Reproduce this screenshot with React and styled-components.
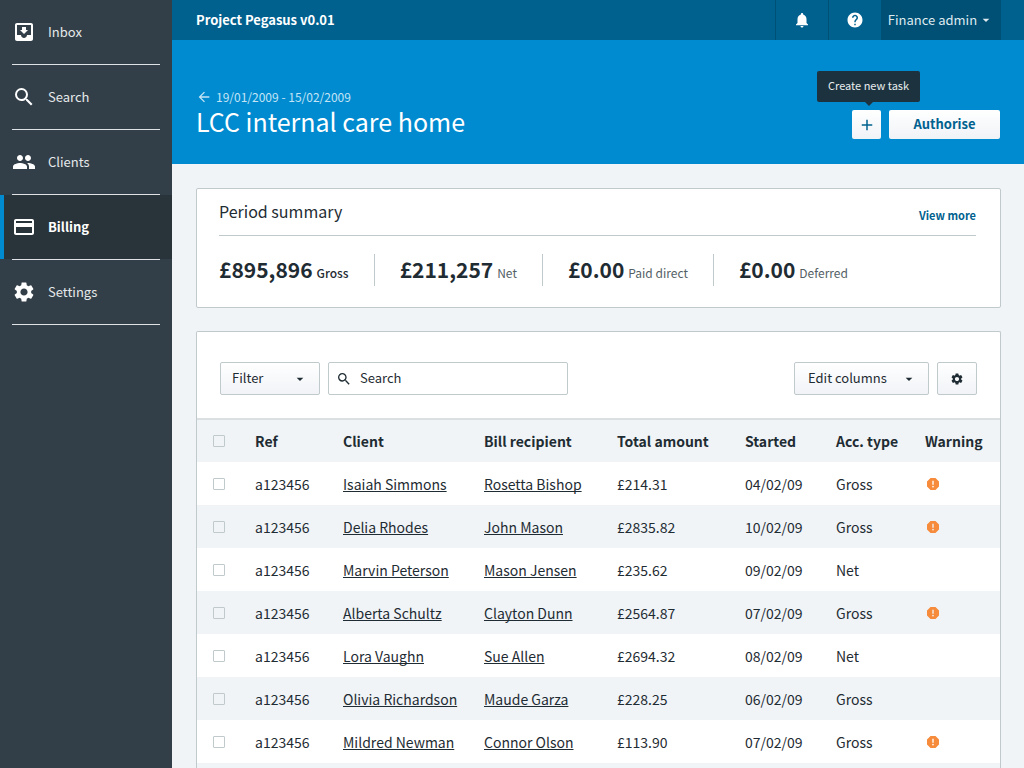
import React from "react";
import styled, { createGlobalStyle } from "styled-components";
import {
  MdMoveToInbox,
  MdSearch,
  MdPeople,
  MdPayment,
  MdSettings,
  MdNotifications,
  MdHelp,
  MdArrowBack,
  MdArrowDropDown,
  MdAdd,
  MdReport,
} from "react-icons/md";

const color = {
  ink: "#1f2c33",
  muted: "#545f66",
  line: "#c0c9cb",
  page: "#f0f4f7",
  brand: "#008bd0",
  brandDark: "#00618f",
  brandDeep: "#004f74",
  side: "#333f48",
  sideActive: "#29343a",
  warn: "#f68b3c",
};

const GlobalStyle = createGlobalStyle`
  *, *::before, *::after { box-sizing: border-box; }
  body {
    margin: 0;
    background: ${color.page};
    color: ${color.ink};
    font: 14px/20px "Noto Sans CJK JP", "Open Sans", sans-serif;
  }
  button, input, select { font: inherit; color: inherit; }
  h1, h2, ul, dl, dd, p { margin: 0; padding: 0; }
  svg { display: block; flex: none; }
`;

const Shell = styled.div`
  display: grid;
  grid-template-columns: 172px minmax(0, 1fr);
  min-height: 100vh;
`;

const Sidebar = styled.nav`
  background: ${color.side};
`;

const NavList = styled.ul`
  list-style: none;
`;

const NavItem = styled.li`
  &::after {
    content: "";
    display: block;
    height: 1px;
    margin: 0 12px;
    background: #dfe2e4;
  }
`;

const NavLink = styled.a`
  display: flex;
  align-items: center;
  gap: 12px;
  height: 64px;
  padding: 0 12px;
  background: ${(p) => (p.$active ? color.sideActive : "transparent")};
  box-shadow: ${(p) => (p.$active ? `inset 4px 0 ${color.brand}` : "none")};
  color: ${(p) => (p.$active ? "#fff" : "#e6e9eb")};
  font-size: 13px;
  font-weight: ${(p) => (p.$active ? 700 : 400)};
  text-decoration: none;

  svg { color: #fff; }
`;

const Main = styled.div`
  display: flex;
  flex-direction: column;
`;

const TopBar = styled.header`
  display: flex;
  justify-content: space-between;
  height: 40px;
  padding: 0 23px 0 24px;
  background: ${color.brandDark};
  color: #fff;
`;

const ProductName = styled.strong`
  align-self: center;
  font-size: 13px;
`;

const TopActions = styled.div`
  display: flex;
  border-right: 1px solid ${color.brandDeep};
`;

const TopButton = styled.button`
  display: flex;
  align-items: center;
  justify-content: center;
  gap: 1px;
  width: ${(p) => (p.$wide ? "119px" : "53px")};
  padding: 0;
  border: 0;
  border-left: 1px solid ${color.brandDeep};
  background: ${(p) => (p.$wide ? color.brandDeep : "transparent")};
  color: ${(p) => (p.$wide ? "#dfeaf0" : "#fff")};
  font-size: 13px;
`;

const Hero = styled.section`
  display: flex;
  align-items: flex-end;
  justify-content: space-between;
  height: 124px;
  padding: 0 24px 25px;
  background: ${color.brand};
  color: #fff;
`;

const HeroHeading = styled.div`
  padding-bottom: 2px;
`;

const BackLink = styled.a`
  display: flex;
  align-items: center;
  gap: 4px;
  color: #c5e4f5;
  font-size: 12px;
  line-height: 16px;
  text-decoration: none;
`;

const Title = styled.h1`
  font-size: 25px;
  font-weight: 400;
  line-height: 32px;
`;

const HeroActions = styled.div`
  display: flex;
  gap: 8px;
`;

const TipAnchor = styled.div`
  position: relative;
`;

const Tooltip = styled.div`
  position: absolute;
  bottom: 37px;
  left: -35px;
  padding: 4px 11px 7px;
  border-radius: 2px;
  background: #1c333f;
  color: #e8ecee;
  font-size: 11px;
  white-space: nowrap;

  &::after {
    content: "";
    position: absolute;
    top: 100%;
    left: 50%;
    margin-left: -4px;
    border: 4px solid transparent;
    border-top-color: #1c333f;
  }
`;

const HeroButton = styled.button`
  display: flex;
  align-items: center;
  justify-content: center;
  width: ${(p) => (p.$square ? "29px" : "111px")};
  height: 29px;
  padding: ${(p) => (p.$square ? "0" : "0 0 2px")};
  border: 0;
  border-radius: 2px;
  background: linear-gradient(#fff, #f0f3f7);
  color: ${color.brandDark};
  font-size: 13px;
  font-weight: 700;
`;

const Content = styled.main`
  display: flex;
  flex: 1;
  flex-direction: column;
  gap: 23px;
  padding: 24px 23px 0 24px;
`;

const Card = styled.section`
  border: 1px solid ${color.line};
  border-radius: 2px;
  background: #fff;
`;

const SummaryCard = styled(Card)`
  padding: 0 24px 21px 22px;
`;

const SummaryHead = styled.div`
  display: flex;
  align-items: center;
  justify-content: space-between;
  height: 47px;
  padding-bottom: 2px;
  border-bottom: 1px solid ${color.line};
`;

const SummaryTitle = styled.h2`
  font-size: 16px;
  font-weight: 400;
`;

const MoreLink = styled.a`
  padding-top: 8px;
  color: ${color.brandDark};
  font-size: 11px;
  font-weight: 700;
  text-decoration: none;
`;

const Stats = styled.dl`
  display: flex;
  padding-top: 18px;
`;

const Stat = styled.div`
  display: flex;
  flex-direction: row-reverse;
  align-items: baseline;
  gap: 4px;
  height: 32px;
  padding: 0 25px;
  border-left: 1px solid ${color.line};
  line-height: 30px;

  &:first-child { padding-left: 0; border-left: 0; }
`;

const StatLabel = styled.dt`
  color: ${(p) => (p.$strong ? color.ink : color.muted)};
  font-size: 12px;
  font-weight: ${(p) => (p.$strong ? 500 : 400)};
`;

const StatValue = styled.dd`
  font-size: 21px;
  font-weight: 700;
`;

const TableCard = styled(Card)`
  display: flex;
  flex: 1;
  flex-direction: column;
  border-bottom: 0;
  border-radius: 2px 2px 0 0;
`;

const Toolbar = styled.div`
  display: flex;
  justify-content: space-between;
  padding: 30px 23px 23px;
`;

const ToolGroup = styled.div`
  display: flex;
  gap: 8px;
`;

const controlBox = `
  height: 33px;
  border: 1px solid ${color.line};
  border-radius: 2px;
  font-size: 13px;
`;

const Picker = styled.label`
  display: grid;
  align-items: center;
  width: ${(p) => (p.$wide ? "135px" : "100px")};

  > * { grid-area: 1 / 1; }
  > svg { justify-self: end; margin-right: 12px; pointer-events: none; }
`;

const Select = styled.select`
  ${controlBox}
  width: 100%;
  padding: 0 ${(p) => (p.$wide ? "13px" : "11px")} 2px;
  appearance: none;
  background: linear-gradient(#fff, #f1f3f7);
`;

const SearchBox = styled.label`
  ${controlBox}
  display: flex;
  align-items: center;
  gap: 8px;
  width: 240px;
  padding: 0 7px;
`;

const SearchInput = styled.input`
  flex: 1;
  min-width: 0;
  padding: 0 0 2px;
  border: 0;
  outline: 0;
  background: none;

  &::placeholder { color: ${color.ink}; opacity: 1; }
`;

const IconButton = styled.button`
  ${controlBox}
  display: flex;
  align-items: center;
  justify-content: center;
  width: 40px;
  padding: 0;
  background: linear-gradient(#fff, #f1f3f7);
`;

const Table = styled.table`
  width: 100%;
  table-layout: fixed;
  border-collapse: collapse;
`;

const HeadRow = styled.tr`
  height: 44px;
  background: ${color.page};
  box-shadow: inset 0 2px #dae0e2;
`;

const Row = styled.tr`
  height: 43px;

  &:nth-child(even) { background: ${color.page}; }
`;

const Col = styled.col`
  width: ${(p) => p.$w}px;
`;

const Th = styled.th`
  padding: 2px 0 0;
  font-weight: 700;
  text-align: left;
`;

const Td = styled.td`
  padding: 0;
`;

const NameLink = styled.a`
  color: inherit;
  text-decoration: underline 1px;
  text-decoration-skip-ink: none;
  text-underline-offset: 1px;
`;

const Check = styled.input`
  display: block;
  width: 12px;
  height: 12px;
  margin: 0 0 0 16px;
  appearance: none;
  border: 1px solid ${color.line};
  border-radius: 1px;
  background: transparent;
`;

const Warning = styled.span`
  display: block;
  color: ${color.warn};
`;

const CardEnd = styled.div`
  flex: 1;
  background: ${color.page};
`;

const navItems = [
  { label: "Inbox", Icon: MdMoveToInbox },
  { label: "Search", Icon: MdSearch },
  { label: "Clients", Icon: MdPeople },
  { label: "Billing", Icon: MdPayment, active: true },
  { label: "Settings", Icon: MdSettings },
];

const stats = [
  { value: "£895,896", label: "Gross", strong: true },
  { value: "£211,257", label: "Net" },
  { value: "£0.00", label: "Paid direct" },
  { value: "£0.00", label: "Deferred" },
];

const columnWidths = [58, 88, 141, 133, 128, 91, 89, 75];
const headings = ["Ref", "Client", "Bill recipient", "Total amount", "Started", "Acc. type", "Warning"];

const bills = [
  ["Isaiah Simmons", "Rosetta Bishop", "£214.31", "04/02/09", "Gross", true],
  ["Delia Rhodes", "John Mason", "£2835.82", "10/02/09", "Gross", true],
  ["Marvin Peterson", "Mason Jensen", "£235.62", "09/02/09", "Net", false],
  ["Alberta Schultz", "Clayton Dunn", "£2564.87", "07/02/09", "Gross", true],
  ["Lora Vaughn", "Sue Allen", "£2694.32", "08/02/09", "Net", false],
  ["Olivia Richardson", "Maude Garza", "£228.25", "06/02/09", "Gross", false],
  ["Mildred Newman", "Connor Olson", "£113.90", "07/02/09", "Gross", true],
];

export default function App() {
  return (
    <>
      <GlobalStyle />
      <Shell>
        <Sidebar>
          <NavList>
            {navItems.map(({ label, Icon, active }) => (
              <NavItem key={label}>
                <NavLink href="#" $active={active}>
                  <Icon size={24} />
                  {label}
                </NavLink>
              </NavItem>
            ))}
          </NavList>
        </Sidebar>
        <Main>
          <TopBar>
            <ProductName>Project Pegasus v0.01</ProductName>
            <TopActions>
              <TopButton aria-label="Notifications"><MdNotifications size={18} /></TopButton>
              <TopButton aria-label="Help"><MdHelp size={18} /></TopButton>
              <TopButton $wide>Finance admin<MdArrowDropDown size={16} /></TopButton>
            </TopActions>
          </TopBar>
          <Hero>
            <HeroHeading>
              <BackLink href="#"><MdArrowBack size={16} />19/01/2009 - 15/02/2009</BackLink>
              <Title>LCC internal care home</Title>
            </HeroHeading>
            <HeroActions>
              <TipAnchor>
                <HeroButton $square aria-label="Create new task"><MdAdd size={18} /></HeroButton>
                <Tooltip role="tooltip">Create new task</Tooltip>
              </TipAnchor>
              <HeroButton>Authorise</HeroButton>
            </HeroActions>
          </Hero>
          <Content>
            <SummaryCard>
              <SummaryHead>
                <SummaryTitle>Period summary</SummaryTitle>
                <MoreLink href="#">View more</MoreLink>
              </SummaryHead>
              <Stats>
                {stats.map((s) => (
                  <Stat key={s.label}>
                    <StatLabel $strong={s.strong}>{s.label}</StatLabel>
                    <StatValue>{s.value}</StatValue>
                  </Stat>
                ))}
              </Stats>
            </SummaryCard>
            <TableCard>
              <Toolbar>
                <ToolGroup>
                  <Picker>
                    <Select aria-label="Filter"><option>Filter</option></Select>
                    <MdArrowDropDown size={16} />
                  </Picker>
                  <SearchBox>
                    <MdSearch size={16} />
                    <SearchInput type="search" placeholder="Search" aria-label="Search" />
                  </SearchBox>
                </ToolGroup>
                <ToolGroup>
                  <Picker $wide>
                    <Select $wide aria-label="Edit columns"><option>Edit columns</option></Select>
                    <MdArrowDropDown size={16} />
                  </Picker>
                  <IconButton aria-label="Table settings"><MdSettings size={14} /></IconButton>
                </ToolGroup>
              </Toolbar>
              <Table>
                <colgroup>
                  {columnWidths.map((w, i) => <Col key={i} $w={w} />)}
                </colgroup>
                <thead>
                  <HeadRow>
                    <Th><Check type="checkbox" aria-label="Select all" /></Th>
                    {headings.map((h) => <Th key={h} scope="col">{h}</Th>)}
                  </HeadRow>
                </thead>
                <tbody>
                  {bills.map(([client, recipient, total, started, type, warning]) => (
                    <Row key={client}>
                      <Td><Check type="checkbox" aria-label={`Select ${client}`} /></Td>
                      <Td>a123456</Td>
                      <Td><NameLink href="#">{client}</NameLink></Td>
                      <Td><NameLink href="#">{recipient}</NameLink></Td>
                      <Td>{total}</Td>
                      <Td>{started}</Td>
                      <Td>{type}</Td>
                      <Td>{warning && <Warning><MdReport size={16} /></Warning>}</Td>
                    </Row>
                  ))}
                </tbody>
              </Table>
              <CardEnd />
            </TableCard>
          </Content>
        </Main>
      </Shell>
    </>
  );
}
